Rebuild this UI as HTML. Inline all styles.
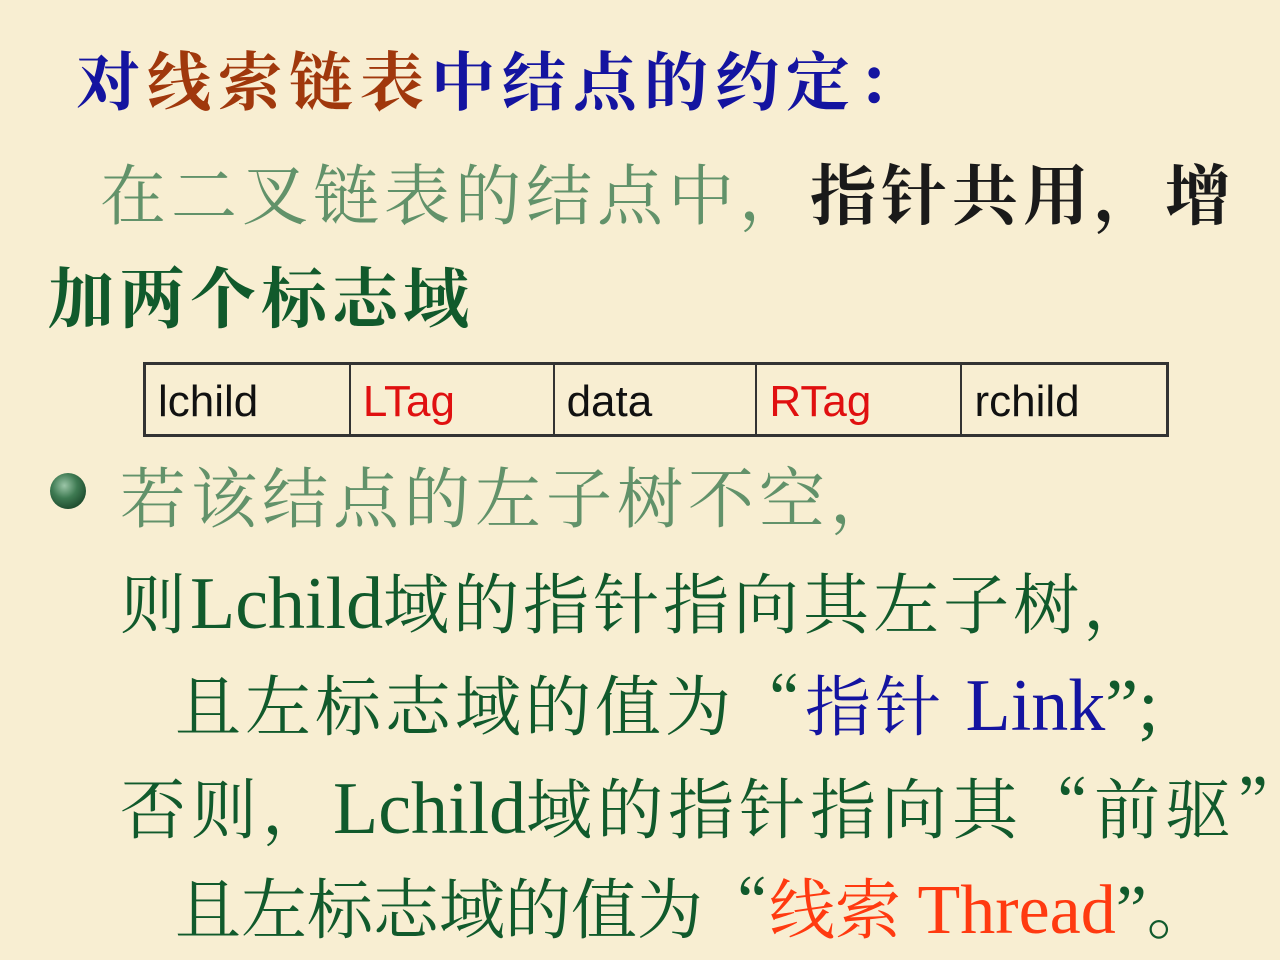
<!DOCTYPE html>
<html><head><meta charset="utf-8"><style>
body{margin:0;width:1280px;height:960px;overflow:hidden;background:#f8eed2;position:relative;
font-family:"Liberation Serif","Noto Serif CJK SC",serif;}
.l{position:absolute;white-space:nowrap;font-size:66px;line-height:1;}
.e{font-size:74px;letter-spacing:0}
.q{font-family:"Noto Serif CJK SC",serif;}
.b{color:#1414a0}.br{color:#a0380c}.lg{color:#62926a}.k{color:#1a1a1a}.g{color:#115a2c}.r{color:#ff3a10}
table{position:absolute;left:143px;top:362px;width:1026px;height:75px;border-collapse:collapse;border:3px solid #333;}
td{border:2px solid #333;font-family:"Liberation Sans",sans-serif;font-size:44px;padding:4px 0 0 12px;width:205px;color:#111}
.dot{position:absolute;left:50px;top:473px;width:36px;height:36px;border-radius:50%;
background:radial-gradient(circle at 40% 35%,#9cc6a8 0%,#3e7a52 40%,#123a20 90%);}
</style></head><body>
<div class="l" style="left:76px;top:52px;font-size:64px;font-weight:bold;letter-spacing:7px"><span class="b">对</span><span class="br">线索链表</span><span class="b">中结点的约定：</span></div>
<div class="l" style="left:100px;top:165px;letter-spacing:5px"><span class="lg">在二叉链表的结点中，</span><span class="k" style="font-weight:bold">指针共用，增</span></div>
<div class="l g" style="left:48px;top:268px;letter-spacing:5px;font-weight:bold">加两个标志域</div>
<table><tr><td>lchild</td><td style="color:#e01010">LTag</td><td>data</td><td style="color:#e01010">RTag</td><td>rchild</td></tr></table>
<div class="dot"></div>
<div class="l lg" style="left:120px;top:468px;letter-spacing:5px">若该结点的左子树不空，</div>
<div class="l g" style="left:120px;top:567px;letter-spacing:4px">则<span class="e">Lchild</span>域的指针指向其左子树，</div>
<div class="l g" style="left:175px;top:669px;letter-spacing:4px">且左标志域的值为<span class="q">“</span><span class="b">指针 <span class="e">Link</span></span><span class="e">”;</span></div>
<div class="l g" style="left:120px;top:772px;letter-spacing:5px">否则，<span class="e">Lchild</span>域的指针指向其<span class="q">“</span>前驱<span class="q">”</span></div>
<div class="l g" style="left:175px;top:872px;letter-spacing:0px">且左标志域的值为<span class="q">“</span><span class="r">线索 <span class="e" style="font-size:70px">Thread</span></span><span class="e" style="font-size:70px">”</span>。</div>
</body></html>
